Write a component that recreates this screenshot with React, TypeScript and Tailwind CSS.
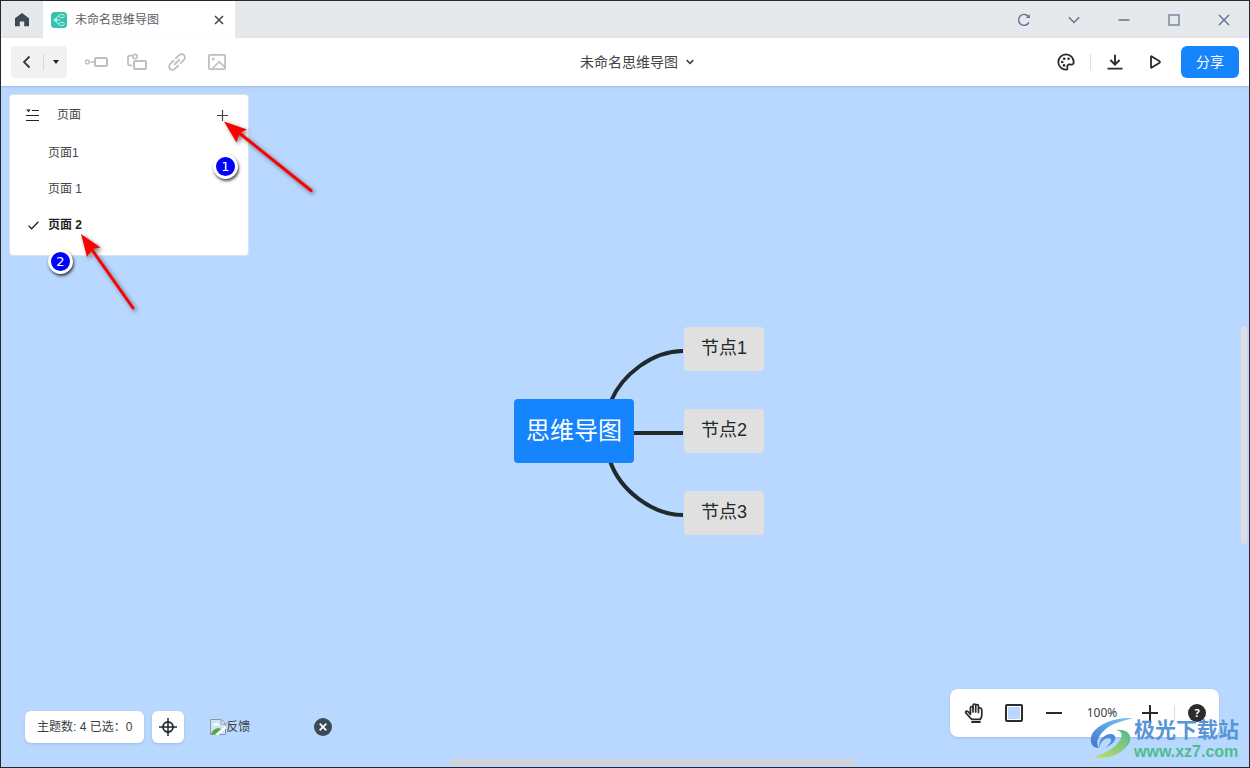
import { useState, ReactNode } from 'react';

const PAGES = ['页面1', '页面 1', '页面 2'];

const NODES = ['节点1', '节点2', '节点3'];

interface IconButtonProps {
  label: string;
  className?: string;
  children: ReactNode;
}

function IconButton({ label, className = '', children }: IconButtonProps) {
  return (
    <button type="button" aria-label={label} className={`flex items-center justify-center shrink-0 ${className}`}>
      {children}
    </button>
  );
}

function TabBar() {
  return (
    <header className="flex h-[37px] bg-[#e5e9ec]">
      <IconButton label="Home" className="w-[42px]">
        <svg width="16" height="16" viewBox="0 0 16 16" fill="#3b4a54">
          <path d="M8 1 L15 6.2 V14.2 H10.2 V9.6 H5.8 V14.2 H1 V6.2 Z" />
        </svg>
      </IconButton>

      <div className="flex items-center w-48 bg-white pl-2 pr-2">
        <svg width="16" height="16" viewBox="0 0 16 16" fill="none">
          <rect width="16" height="16" rx="3.5" fill="#35c2b0" />
          <g stroke="#b9ece4">
            <rect x="8.2" y="2.6" width="5" height="3" rx="1.2" />
            <rect x="8.2" y="10.4" width="5" height="3" rx="1.2" />
            <path d="M8 4 C5.8 4 5.5 5.5 5.2 8 C5.5 10.5 5.8 12 8 12 M5.2 8 H9" />
          </g>
          <circle cx="4.6" cy="8" r="1.8" fill="#c9f1ea" />
        </svg>
        <span className="ml-2 flex-1 text-xs text-[#5a6065]">未命名思维导图</span>
        <IconButton label="Close tab" className="w-4 h-4">
          <svg width="10" height="10" viewBox="0 0 10 10" stroke="#444" strokeWidth="1.5">
            <path d="M1 1 L9 9 M9 1 L1 9" />
          </svg>
        </IconButton>
      </div>

      <div className="ml-auto flex">
        <IconButton label="Refresh" className="w-[50px]">
          <svg width="14" height="14" viewBox="0 0 14 14" fill="none" stroke="#5f7092" strokeWidth="1.4">
            <path d="M11.8 4 A5.5 5.5 0 1 0 12 9.4" />
            <path d="M12.2 1.6 V4.4 H9.4" strokeWidth="1.2" />
          </svg>
        </IconButton>
        <IconButton label="More" className="w-[50px]">
          <svg width="12" height="12" viewBox="0 0 12 12" fill="none" stroke="#5f7092" strokeWidth="1.4">
            <path d="M0.8 3.2 L6 8.6 L11.2 3.2" />
          </svg>
        </IconButton>
        <IconButton label="Minimize" className="w-[50px]">
          <svg width="12" height="12" viewBox="0 0 12 12" stroke="#5f7092" strokeWidth="1.5">
            <path d="M0.5 6 H11.5" />
          </svg>
        </IconButton>
        <IconButton label="Maximize" className="w-[50px]">
          <svg width="12" height="12" viewBox="0 0 12 12" fill="none" stroke="#5f7092" strokeWidth="1.2">
            <rect x="1" y="1" width="10" height="10" />
          </svg>
        </IconButton>
        <IconButton label="Close" className="w-[50px]">
          <svg width="12" height="12" viewBox="0 0 12 12" stroke="#5f7092" strokeWidth="1.4">
            <path d="M1 1 L11 11 M11 1 L1 11" />
          </svg>
        </IconButton>
      </div>
    </header>
  );
}

function Toolbar() {
  return (
    <div className="grid grid-cols-[1fr_auto_1fr] items-center h-12 px-[10px] bg-white shadow-sm z-10">
      <div className="flex items-center gap-4">
        <div className="flex items-center w-14 h-8 mr-[2px] rounded bg-[#f1f1f1]">
          <IconButton label="Back" className="w-8 h-8">
            <svg width="14" height="14" viewBox="0 0 14 14" fill="none" stroke="#2e3c42" strokeWidth="1.8">
              <path d="M9.5 1.5 L4 7 L9.5 12.5" />
            </svg>
          </IconButton>
          <div className="w-px h-4 bg-[#d8d8d8]"></div>
          <IconButton label="Back menu" className="flex-1 h-8">
            <svg width="6" height="4" viewBox="0 0 6 4" fill="#222">
              <path d="M0 0 H6 L3 4 Z" />
            </svg>
          </IconButton>
        </div>

        <IconButton label="Add subtopic" className="w-6 h-6">
          <svg width="24" height="24" viewBox="0 0 24 24" fill="none" stroke="#bfbfbf" strokeWidth="2">
            <circle cx="2.4" cy="12" r="1.9" strokeWidth="1.5" />
            <path d="M5.6 12 H9" strokeWidth="1.6" />
            <rect x="10" y="8" width="12" height="8" rx="1" />
          </svg>
        </IconButton>
        <IconButton label="Add topic" className="w-6 h-6">
          <svg width="24" height="24" viewBox="0 0 24 24" fill="none" stroke="#bfbfbf" strokeWidth="2">
            <path d="M7 5.6 H4.5 Q3 5.6 3 7 V14 Q3 15.4 4.5 15.4 H7" strokeWidth="1.8" />
            <circle cx="10" cy="6.4" r="2.1" strokeWidth="1.7" />
            <rect x="9" y="11" width="12" height="8" rx="1" />
          </svg>
        </IconButton>
        <IconButton label="Insert link" className="w-6 h-6">
          <svg width="18" height="18" viewBox="0 0 24 24" fill="none" stroke="#bfbfbf" strokeWidth="2.4" strokeLinecap="round">
            <path d="M9 15 L15 9" />
            <path d="M10.5 7 L14.8 2.9 A4.4 4.4 0 0 1 21.2 9.2 L16.8 13.6" />
            <path d="M13.5 17 L9.2 21.1 A4.4 4.4 0 0 1 2.8 14.8 L7.2 10.4" />
          </svg>
        </IconButton>
        <IconButton label="Insert image" className="w-6 h-6">
          <svg width="18" height="16" viewBox="0 0 18 16" fill="none" stroke="#bfbfbf" strokeWidth="1.8">
            <rect x="0.9" y="0.9" width="16.2" height="14.2" rx="1" />
            <circle cx="5.3" cy="5" r="1.4" fill="#bfbfbf" stroke="none" />
            <path d="M4 15 L11.2 7.8 L17 13.4" strokeWidth="1.6" />
          </svg>
        </IconButton>
      </div>

      <button type="button" className="flex items-center gap-2 pl-6 text-sm text-[#444]">
        未命名思维导图
        <svg width="8" height="6" viewBox="0 0 8 6" fill="none" stroke="#333" strokeWidth="1.5">
          <path d="M0.7 1 L4 4.4 L7.3 1" />
        </svg>
      </button>

      <div className="flex items-center justify-end gap-3">
        <IconButton label="Theme" className="w-6 h-6">
          <svg width="18" height="18" viewBox="0 0 18 18" fill="none" stroke="#2b2b2b" strokeWidth="1.8">
            <path d="M9 1.3 A7.7 7.7 0 1 0 9 16.7 C10.8 16.7 10.6 15.4 10.3 14.2 C9.9 12.3 11 11.2 12.8 11.5 C15.4 12 16.7 11.4 16.7 9 A7.7 7.7 0 0 0 9 1.3 Z" />
            <g fill="#2b2b2b" stroke="none">
              <circle cx="7.2" cy="5.8" r="1.3" />
              <circle cx="11.6" cy="5.8" r="1.3" />
              <circle cx="5.2" cy="9" r="1.3" />
              <circle cx="7" cy="12.4" r="1.3" />
            </g>
          </svg>
        </IconButton>
        <div className="w-px h-4 bg-[#ddd]"></div>
        <IconButton label="Download" className="w-6 h-6">
          <svg width="16" height="16" viewBox="0 0 16 16" fill="none" stroke="#2b2b2b" strokeWidth="1.9">
            <path d="M8 0.8 V10 M3.4 6 L8 10.6 L12.6 6 M0.5 14.6 H15.5" />
          </svg>
        </IconButton>
        <div className="flex items-center gap-[14px] pl-1">
          <IconButton label="Present" className="w-6 h-6">
            <svg width="14" height="14" viewBox="0 0 14 14" fill="none" stroke="#2b2b2b" strokeWidth="1.8" strokeLinejoin="round">
              <path d="M3 1.8 Q3 1 3.8 1.4 L11.6 6.3 Q12.3 7 11.6 7.7 L3.8 12.6 Q3 13 3 12.2 Z" />
            </svg>
          </IconButton>
          <button type="button" className="w-[58px] h-8 rounded-md bg-[#1684fc] text-sm text-white">
            分享
          </button>
        </div>
      </div>
    </div>
  );
}

function PagePanel() {
  const [current, setCurrent] = useState(2);

  return (
    <aside className="w-60 pb-3 rounded border border-[#dce3ec] bg-white text-xs text-[#444]">
      <div className="flex items-center h-10 pl-4 pr-5">
        <svg width="13" height="13" viewBox="0 0 13 13" stroke="#222">
          <path d="M6 1.5 H13 M0 6.5 H13 M0 11.5 H13" strokeWidth="1.1" />
          <path d="M0.2 0.5 H4.8 L2.5 3.2 Z" fill="#222" stroke="none" />
        </svg>
        <h2 className="ml-[18px] flex-1">页面</h2>
        <IconButton label="Add page" className="w-3 h-3">
          <svg width="11" height="11" viewBox="0 0 11 11" stroke="#444" strokeWidth="1.2">
            <path d="M5.5 0 V11 M0 5.5 H11" />
          </svg>
        </IconButton>
      </div>
      {PAGES.map((page, i) => (
        <button
          key={page}
          type="button"
          onClick={() => setCurrent(i)}
          className={`flex items-center w-full h-9 pl-[18px] ${i === current ? 'font-bold text-[#222]' : ''}`}
        >
          <span className="w-5">
            {i === current && (
              <svg width="11" height="9" viewBox="0 0 11 9" fill="none" stroke="#222" strokeWidth="1.3">
                <path d="M0.6 4.6 L3.6 7.8 L10.4 0.8" />
              </svg>
            )}
          </span>
          {page}
        </button>
      ))}
    </aside>
  );
}

function MindMap() {
  return (
    <div className="absolute left-[513px] top-[241px] flex items-center justify-between w-[250px]">
      <svg className="absolute inset-0 w-full h-full" viewBox="0 0 250 208" fill="none" stroke="#1f2a2d" strokeWidth="4">
        <path d="M97 74 C108 48 138 24 169 24" />
        <path d="M110 106 H169" />
        <path d="M96 134 C106 163 138 188 169 188" />
      </svg>
      <div className="relative flex items-center justify-center w-30 h-16 rounded bg-[#1684fc] text-2xl text-white">
        思维导图
      </div>
      <div className="relative flex flex-col gap-[38px]">
        {NODES.map(node => (
          <div key={node} className="flex justify-center w-20 h-11 rounded bg-[#e0e0e0] text-lg leading-[42px] text-[#1f2a2d]">
            {node}
          </div>
        ))}
      </div>
    </div>
  );
}

function StatusBar() {
  return (
    <footer className="mt-auto flex items-end justify-between pl-4 pr-[22px] pb-4 text-xs text-[#3a3f42]">
      <div className="flex items-center gap-2">
        <div className="flex items-center h-8 px-3 rounded-md bg-white shadow-sm">主题数: 4 已选：0</div>
        <IconButton label="Center map" className="w-8 h-8 rounded-md bg-white shadow-sm">
          <svg width="18" height="18" viewBox="0 0 18 18" fill="none" stroke="#1f2a2d" strokeWidth="1.8">
            <circle cx="9" cy="9" r="5" />
            <path d="M9 0 V18 M0 9 H18" strokeWidth="1.5" />
          </svg>
        </IconButton>
        <a href="#feedback" className="flex items-center ml-[18px] w-24">
          <svg width="16" height="16" viewBox="0 0 16 16">
            <path d="M0.5 0.5 H11 L15.5 5 V15.5 H0.5 Z" fill="#cfe2fb" stroke="#8f979f" />
            <path d="M11 0.5 V5 H15.5 Z" fill="#fff" stroke="#8f979f" />
            <path d="M3 6.5 Q3 4.5 5 4.5 Q6.5 2.8 7.8 4.6 Q9.5 4.8 9 6.5 Z" fill="#fff" />
            <path d="M1 15 Q3 9.5 9 9 L11 10.2 L5.5 15 Z" fill="#55ab3a" />
            <path d="M5 16 L16 6.5 V9.5 L8.5 16 Z" fill="#fff" />
          </svg>
          反馈
        </a>
        <IconButton label="Close feedback" className="w-[18px] h-[18px] rounded-full bg-[#3b4a54]">
          <svg width="8" height="8" viewBox="0 0 8 8" stroke="#fff" strokeWidth="1.8">
            <path d="M0.7 0.7 L7.3 7.3 M7.3 0.7 L0.7 7.3" />
          </svg>
        </IconButton>
      </div>

      <div className="flex items-center h-12 mb-[6px] pl-3 pr-[10px] rounded-lg bg-white shadow-sm font-[Noto_Sans]">
        <IconButton label="Pan" className="w-6 h-6">
          <svg width="20" height="20" viewBox="0 0 20 20" fill="none" stroke="#2b2b2b" strokeWidth="1.7" strokeLinejoin="round" strokeLinecap="round">
            <path d="M6.4 11.4 V4.8 Q6.4 3.5 7.7 3.5 Q8.9 3.5 9 4.6 V2.4 Q9 1 10.4 1 Q11.7 1 11.7 2.4 Q12 1.6 13.1 1.6 Q14.5 1.6 14.5 3.2 V5.4 Q15 4.6 16 4.8 Q17.6 5 17.8 6.8 V12.4 Q17.6 14.4 16.2 16.4 H8.2 Q6.4 15.4 4.6 12.9 L1.8 10 Q1.2 8.4 2.8 8.2 Q4.4 8.4 6.4 11.4" />
            <path d="M9 4.4 V9 M11.7 2.6 V9 M14.5 5 V9.4" />
            <path d="M8 19 H16" strokeWidth="1.8" />
          </svg>
        </IconButton>
        <IconButton label="Background" className="w-6 h-6 ml-4">
          <span className="w-[18px] h-[18px] rounded-xs border-2 border-[#2b2b2b] bg-[#b8d8ff] shadow-[inset_0_0_0_1px_#fff]"></span>
        </IconButton>
        <IconButton label="Zoom out" className="w-6 h-6 ml-4">
          <svg width="16" height="16" viewBox="0 0 16 16" stroke="#2b2b2b" strokeWidth="2">
            <path d="M0 8 H16" />
          </svg>
        </IconButton>
        <span className="w-[72px] text-center">100%</span>
        <IconButton label="Zoom in" className="w-6 h-6">
          <svg width="16" height="16" viewBox="0 0 16 16" stroke="#2b2b2b" strokeWidth="2">
            <path d="M0 8 H16 M8 0 V16" />
          </svg>
        </IconButton>
        <div className="w-px h-4 ml-3 mr-[10px] bg-[#ddd]"></div>
        <IconButton label="Help" className="w-6 h-6">
          <span className="w-[18px] h-[18px] rounded-full bg-[#2b2b2b] font-bold leading-[18px] text-[11px] text-white">?</span>
        </IconButton>
      </div>
    </footer>
  );
}

function StepBadge({ step, className }: { step: number; className: string }) {
  return (
    <div
      className={`absolute flex items-center justify-center w-[25px] h-[25px] rounded-full border-[3px] border-white bg-[#0000fe] font-[DejaVu_Sans] text-[13px] text-white shadow-[1px_2px_3px_rgba(0,0,0,0.7)] ${className}`}
    >
      {step}
    </div>
  );
}

// Numbered steps and red arrows pinned over the page panel
function Annotations() {
  return (
    <div className="absolute left-0 top-0 pointer-events-none">
      <svg className="drop-shadow-[2px_2px_2px_rgba(0,0,0,0.5)]" width="330" height="240" viewBox="1 86 330 240" fill="#fe0000" stroke="#fe0000">
        <path d="M238 132 L311 190.500" strokeWidth="3" strokeLinecap="round" />
        <path d="M224 121.500 L247 129.500 L239.500 133 L236.500 142.500 Z" stroke="none" />
        <path d="M90 247 L133 308" strokeWidth="3" strokeLinecap="round" />
        <path d="M81 234 L100.500 247.500 L92.500 249 L87 257 Z" stroke="none" />
      </svg>
      <StepBadge step={1} className="left-[212px] top-[68px]" />
      <StepBadge step={2} className="left-[47px] top-[163px]" />
    </div>
  );
}

function Watermark() {
  return (
    <div className="absolute right-[10px] bottom-[5px] flex items-center gap-px pointer-events-none">
      <svg width="43" height="42" viewBox="0 0 43 42">
        <defs>
          <linearGradient id="swooshBlue" x1="0" y1="1" x2="1" y2="0">
            <stop offset="0" stopColor="#3f76cd" />
            <stop offset="1" stopColor="#7cc8f4" />
          </linearGradient>
          <linearGradient id="swooshGreen" x1="0" y1="1" x2="1" y2="0">
            <stop offset="0" stopColor="#c6de66" />
            <stop offset="1" stopColor="#4fba92" />
          </linearGradient>
        </defs>
        <path d="M43 1 C28 0 9 5 2 17 C-1 25 2 31 9 31 C5 26 8 18 17 11 C25 5 34 4 43 1 Z" fill="url(#swooshBlue)" />
        <path d="M9 31 C8 23 15 16 22 17 C28 19 26 26 16 30 C22 25 23 21 18 21 C13 22 10 26 9 31 Z" fill="#4c8bd8" />
        <path d="M26 13 C33 14 33 20 28 26 C22 33 13 37 4 40 C18 44 36 35 40 24 C42 17 36 12 26 13 Z" fill="url(#swooshGreen)" />
      </svg>
      <div className="pt-1">
        <p className="text-[21px] font-bold text-[#5795d6] leading-6">极光下载站</p>
        <p className="text-base font-bold text-[#4fbd8b] leading-5">www.xz7.com</p>
      </div>
    </div>
  );
}

export default function App() {
  return (
    <div className="flex flex-col min-h-screen border border-[#24272b] overflow-hidden font-['Liberation_Sans','Noto_Sans_CJK_SC',sans-serif]">
      <TabBar />
      <Toolbar />
      <main className="relative flex flex-1 flex-col p-2 bg-[#b8d8ff]">
        <PagePanel />
        <MindMap />
        <StatusBar />
        <Annotations />
        <div className="absolute right-[2px] top-60 w-[6px] h-[218px] rounded-full bg-[#dddde3]"></div>
        <div className="absolute left-[449px] bottom-[2px] w-[406px] h-[6px] rounded-full bg-[#d3d3d7]"></div>
        <Watermark />
      </main>
    </div>
  );
}
